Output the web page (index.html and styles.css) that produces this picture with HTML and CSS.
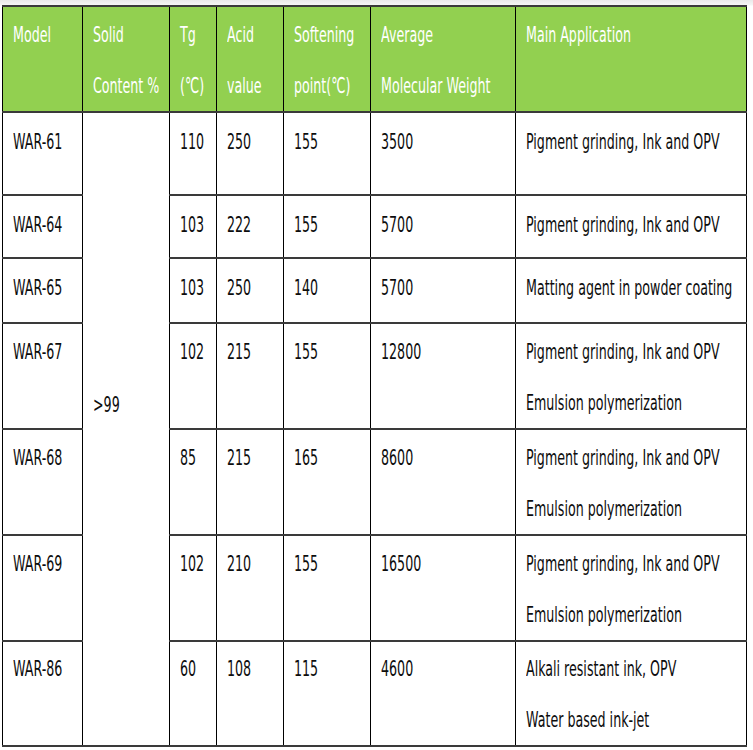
FILE: index.html
```html
<!DOCTYPE html>
<html>
<head>
<meta charset="utf-8">
<link rel="stylesheet" href="styles.css">
</head>
<body>
<div class="page">
<table class="spec">
<colgroup>
<col class="c1"><col class="c2"><col class="c3"><col class="c4"><col class="c5"><col class="c6"><col class="c7">
</colgroup>
<thead>
<tr class="h">
<th><span class="t">Model</span></th>
<th><span class="t">Solid<br>Content %</span></th>
<th><span class="t">Tg<br>(℃)</span></th>
<th><span class="t">Acid<br>value</span></th>
<th><span class="t">Softening<br>point(℃)</span></th>
<th><span class="t">Average<br>Molecular Weight</span></th>
<th><span class="t">Main Application</span></th>
</tr>
</thead>
<tbody>
<tr class="r61">
<td><span class="t">WAR-61</span></td>
<td rowspan="7" class="solid"><span class="t">&gt;99</span></td>
<td><span class="t">110</span></td>
<td><span class="t">250</span></td>
<td><span class="t">155</span></td>
<td><span class="t">3500</span></td>
<td><span class="t">Pigment grinding, Ink and OPV</span></td>
</tr>
<tr class="r64">
<td><span class="t">WAR-64</span></td>
<td><span class="t">103</span></td>
<td><span class="t">222</span></td>
<td><span class="t">155</span></td>
<td><span class="t">5700</span></td>
<td><span class="t">Pigment grinding, Ink and OPV</span></td>
</tr>
<tr class="r65">
<td><span class="t">WAR-65</span></td>
<td><span class="t">103</span></td>
<td><span class="t">250</span></td>
<td><span class="t">140</span></td>
<td><span class="t">5700</span></td>
<td><span class="t">Matting agent in powder coating</span></td>
</tr>
<tr class="r2">
<td><span class="t">WAR-67</span></td>
<td><span class="t">102</span></td>
<td><span class="t">215</span></td>
<td><span class="t">155</span></td>
<td><span class="t">12800</span></td>
<td><span class="t">Pigment grinding, Ink and OPV<br>Emulsion polymerization</span></td>
</tr>
<tr class="r2">
<td><span class="t">WAR-68</span></td>
<td><span class="t">85</span></td>
<td><span class="t">215</span></td>
<td><span class="t">165</span></td>
<td><span class="t">8600</span></td>
<td><span class="t">Pigment grinding, Ink and OPV<br>Emulsion polymerization</span></td>
</tr>
<tr class="r2">
<td><span class="t">WAR-69</span></td>
<td><span class="t">102</span></td>
<td><span class="t">210</span></td>
<td><span class="t">155</span></td>
<td><span class="t">16500</span></td>
<td><span class="t">Pigment grinding, Ink and OPV<br>Emulsion polymerization</span></td>
</tr>
<tr class="r86">
<td><span class="t">WAR-86</span></td>
<td><span class="t">60</span></td>
<td><span class="t">108</span></td>
<td><span class="t">115</span></td>
<td><span class="t">4600</span></td>
<td><span class="t">Alkali resistant ink, OPV<br>Water based ink-jet</span></td>
</tr>
</tbody>
</table>
</div>
</body>
</html>
```

FILE: styles.css
```css
html, body {
  margin: 0;
  padding: 0;
  background: #ffffff;
}

.page {
  width: 753px;
  height: 750px;
  padding: 5px 0 0 2px;
  box-sizing: border-box;
  overflow: hidden;
  background: linear-gradient(to bottom, #e9e9e9 0px, #f6f6f6 5px, #ffffff 6px);
  font-family: "DejaVu Sans", Verdana, sans-serif;
}

.spec {
  border-collapse: collapse;
  table-layout: fixed;
  width: 744px;
  background: #ffffff;
}

.c1 { width: 80px; }
.c2 { width: 87px; }
.c3 { width: 47px; }
.c4 { width: 67px; }
.c5 { width: 87px; }
.c6 { width: 145px; }
.c7 { width: 231px; }

.spec th,
.spec td {
  border-left: 1px solid #000;
  border-right: 1px solid #000;
  border-top: 2px solid #3a3a3a;
  border-bottom: 2px solid #3a3a3a;
  padding: 3px 0 0 10px;
  vertical-align: top;
  text-align: left;
  font-size: 22px;
  font-weight: normal;
  line-height: 51px;
  overflow: hidden;
}

.spec th {
  background: #92d050;
  color: #ffffff;
  padding-top: 2px;
}

.spec td {
  color: #0d0d0d;
}

.spec .r2 td {
  padding-top: 2px;
}

.spec .r86 td {
  padding-top: 1px;
}

.t {
  display: inline-block;
  white-space: nowrap;
  transform: scaleX(0.575);
  transform-origin: 0 0;
}

.h { height: 100px; }
.r61 { height: 83px; }
.r64 { height: 63px; }
.r65 { height: 65px; }
.r2 { height: 106px; }
.r86 { height: 105px; }

.spec td.solid {
  vertical-align: middle;
  padding-top: 0;
  padding-bottom: 50px;
}
```
